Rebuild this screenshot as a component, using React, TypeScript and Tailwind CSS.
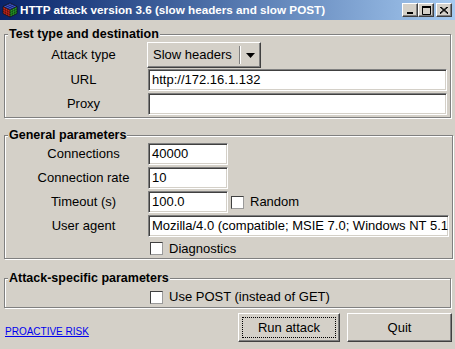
import { ReactNode } from 'react';

const raised = 'border border-white border-r-[#404040] border-b-[#404040] shadow-[inset_-1px_-1px_0_#808080]';
const sunken = 'border border-[#808080] border-r-white border-b-white shadow-[inset_1px_1px_0_#404040,inset_-1px_-1px_0_#d4d0c8]';
const frame = 'border border-[#808080] shadow-[inset_1px_1px_0_#fff,1px_1px_0_#fff]';

function Label({ children }: { children: ReactNode }) {
  return <div className="w-[143px] pl-[14px] text-center whitespace-nowrap">{children}</div>;
}

function Field({ value, className = '' }: { value?: string; className?: string }) {
  return (
    <div className={`h-[22px] bg-white ${sunken} pl-[3px] flex items-center whitespace-nowrap overflow-hidden ${className}`}>
      {value}
    </div>
  );
}

function Check({ label }: { label: string }) {
  return (
    <div className="flex items-center gap-[6px]">
      <div className="w-[13px] h-[13px] bg-white border border-[#404040] border-r-[#9a9a9a] border-b-[#9a9a9a]" />
      <span>{label}</span>
    </div>
  );
}

function WinButton({ children, className = '' }: { children: ReactNode; className?: string }) {
  return (
    <div className={`w-[16px] h-[14px] bg-[#d4d0c8] ${raised} flex items-center justify-center ${className}`}>
      {children}
    </div>
  );
}

function Legend({ children }: { children: ReactNode }) {
  return (
    <legend className="ml-[3px] px-[1px] font-bold text-[12.5px] leading-[14px] bg-[#d4d0c8]">{children}</legend>
  );
}

export default function App() {
  return (
    <div className="w-[455px] h-[349px] bg-[#d4d0c8] flex flex-col overflow-hidden text-[13px] text-black font-['Liberation_Sans',Arial,sans-serif]">
      {/* title bar */}
      <div className="h-[20px] flex items-center bg-gradient-to-r from-[#0a246a] to-[#a6caf0]">
        <svg width="16" height="16" viewBox="0 0 16 16" className="ml-[2px]">
          <polygon points="8,1 15,4.5 8,8 1,4.5" fill="#3c5ad8" />
          <polygon points="1,4.5 8,8 8,15 1,11.5" fill="#d42a1e" />
          <polygon points="8,8 15,4.5 15,11.5 8,15" fill="#2aa02a" />
          <path d="M3.3 3.3 L10.3 6.8 M5.7 2.2 L12.7 5.7 M10.3 2.2 L3.3 5.7 M12.7 3.3 L5.7 6.8" stroke="#1a1a4a" strokeWidth="0.6" />
          <path d="M3.3 5.6 V12.6 M5.7 6.8 V13.8 M1 7 L8 10.5 M1 9.3 L8 12.8" stroke="#4a0a0a" strokeWidth="0.6" />
          <path d="M10.3 6.8 V13.8 M12.7 5.6 V12.6 M8 10.5 L15 7 M8 12.8 L15 9.3" stroke="#0a3a0a" strokeWidth="0.6" />
          <path d="M8 1 L15 4.5 L15 11.5 L8 15 L1 11.5 L1 4.5 Z M8 8 V15 M1 4.5 L8 8 L15 4.5" fill="none" stroke="#111" strokeWidth="0.8" />
        </svg>
        <span className="ml-[2px] text-white font-bold text-[11.7px] whitespace-nowrap">
          HTTP attack version 3.6 (slow headers and slow POST)
        </span>
        <div className="ml-auto mr-[3px] flex items-center">
          <WinButton>
            <svg width="8" height="7" viewBox="0 0 8 7"><rect x="1" y="5" width="6" height="2" fill="#000" /></svg>
          </WinButton>
          <WinButton>
            <svg width="9" height="9" viewBox="0 0 9 9"><path d="M0.5 1.5 H8.5 V8.5 H0.5 Z M0.5 1 H8.5" fill="none" stroke="#000" strokeWidth="1" /><rect x="0" y="0" width="9" height="2" fill="#000" /></svg>
          </WinButton>
          <WinButton className="ml-[2px]">
            <svg width="8" height="7" viewBox="0 0 8 7"><path d="M0 0 L8 7 M1 0 L8 6 M8 0 L0 7 M7 0 L0 6" stroke="#000" strokeWidth="1" /></svg>
          </WinButton>
        </div>
      </div>

      {/* Test type and destination */}
      <fieldset className={`mt-[7px] mx-[4px] px-0 pt-[1px] pb-[2px] ${frame}`}>
        <Legend>Test type and destination</Legend>
        <div className="flex items-center h-[26px]">
          <Label>Attack type</Label>
          <div className={`ml-[-1px] w-[114px] h-[26px] flex items-center bg-[#d4d0c8] ${raised}`}>
            <span className="pl-[5px] flex-1 whitespace-nowrap">Slow headers</span>
            <div className="w-px self-stretch my-[3px] bg-[#808080] shadow-[1px_0_0_#fff]" />
            <div className="w-[20px] flex justify-center">
              <svg width="9" height="5" viewBox="0 0 9 5"><polygon points="0,0 9,0 4.5,5" fill="#000" /></svg>
            </div>
          </div>
        </div>
        <div className="flex items-center mt-[1px]">
          <Label>URL</Label>
          <Field value="http://172.16.1.132" className="flex-1 mr-[3px]" />
        </div>
        <div className="flex items-center mt-[2px]">
          <Label>Proxy</Label>
          <Field className="flex-1 mr-[3px]" />
        </div>
      </fieldset>

      {/* General parameters */}
      <fieldset className={`mt-[10px] mx-[4px] px-0 pt-[1px] ${frame}`}>
        <Legend>General parameters</Legend>
        <div className="flex flex-col gap-[2px]">
          <div className="flex items-center">
            <Label>Connections</Label>
            <Field value="40000" className="w-[80px]" />
          </div>
          <div className="flex items-center">
            <Label>Connection rate</Label>
            <Field value="10" className="w-[80px]" />
          </div>
          <div className="flex items-center">
            <Label>Timeout (s)</Label>
            <Field value="100.0" className="w-[80px]" />
            <div className="ml-[3px]">
              <Check label="Random" />
            </div>
          </div>
          <div className="flex items-center">
            <Label>User agent</Label>
            <Field value="Mozilla/4.0 (compatible; MSIE 7.0; Windows NT 5.1" className="flex-1 mr-[3px]" />
          </div>
          <div className="flex items-center h-[19px] pl-[145px]">
            <Check label="Diagnostics" />
          </div>
        </div>
      </fieldset>

      {/* Attack-specific parameters */}
      <fieldset className={`mt-[12px] mx-[4px] px-0 ${frame}`}>
        <Legend>Attack-specific parameters</Legend>
        <div className="flex items-center h-[22px] pt-[2px] pl-[145px]">
          <Check label="Use POST (instead of GET)" />
        </div>
      </fieldset>

      {/* footer */}
      <div className="mt-[5px] flex items-end pl-[5px] pr-[3px]">
        <a href="#" className="mb-[3px] text-[10px] leading-[14px] text-[#0000ee] underline whitespace-nowrap">
          PROACTIVE RISK
        </a>
        <div className="ml-auto flex gap-[7px]">
          <div className={`w-[102px] h-[29px] bg-[#d4d0c8] ${raised} p-[3px]`}>
            <div className="w-full h-full border border-dotted border-black flex items-center justify-center">
              Run attack
            </div>
          </div>
          <div className={`w-[105px] h-[29px] bg-[#d4d0c8] ${raised} flex items-center justify-center`}>
            Quit
          </div>
        </div>
      </div>
    </div>
  );
}
